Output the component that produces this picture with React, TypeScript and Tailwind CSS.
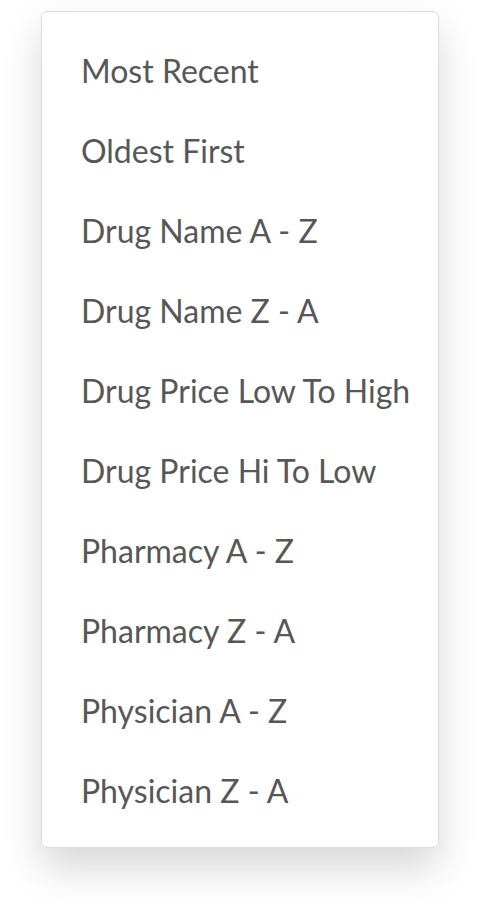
const options = [
  'Most Recent',
  'Oldest First',
  'Drug Name A - Z',
  'Drug Name Z - A',
  'Drug Price Low To High',
  'Drug Price Hi To Low',
  'Pharmacy A - Z',
  'Pharmacy Z - A',
  'Physician A - Z',
  'Physician Z - A',
]

export default function App() {
  return (
    <div className="min-h-[920px] w-[480px] bg-white pt-[11px] pl-[41px] font-['Lato',sans-serif]">
      <ul className="w-[398px] rounded-[6px] border border-[#dcdcdc] bg-white pt-[19px] pb-[16px] shadow-[0_20px_40px_rgba(0,0,0,0.16)]">
        {options.map(option => (
          <li
            className="flex h-[80px] items-center pl-[39px] text-[32px] leading-[80px] text-[#575757]"
            key={option}
          >
            {option}
          </li>
        ))}
      </ul>
    </div>
  )
}
